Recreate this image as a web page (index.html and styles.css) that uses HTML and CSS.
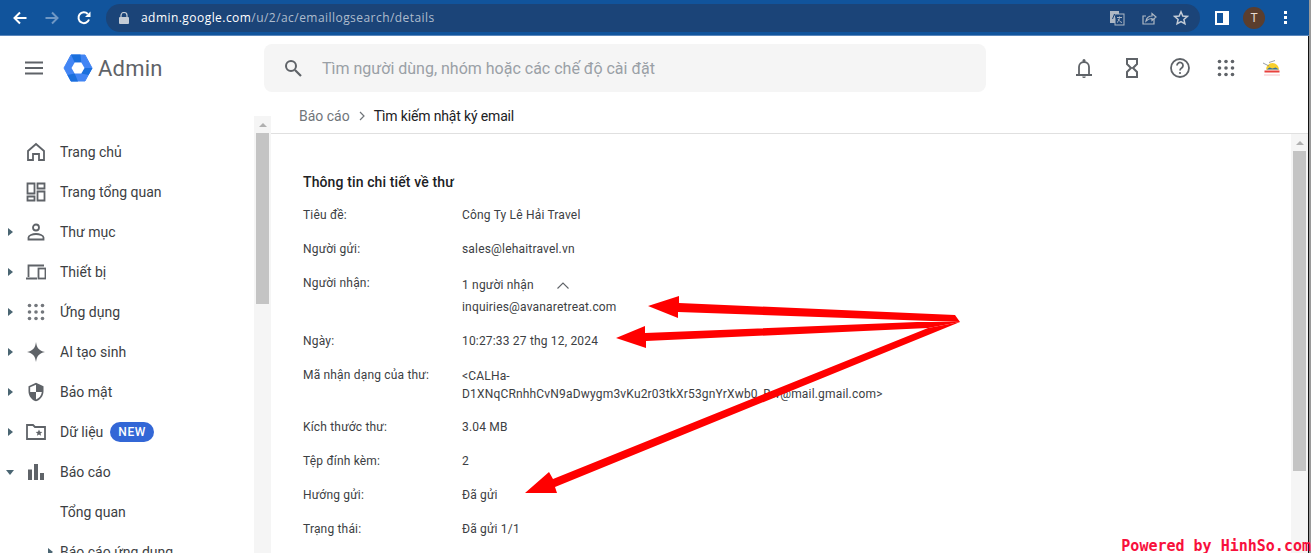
FILE: index.html
```html
<!DOCTYPE html>
<html lang="vi">
<head>
    <meta charset="UTF-8">
    <meta name="viewport" content="width=device-width, initial-scale=1.0">
    <title>Admin - Tìm kiếm nhật ký email</title>
    <link rel="stylesheet" href="styles.css">
</head>
<body>

<div class="browser-bar">
    <svg class="nav-btn" viewBox="0 0 16 16"><path d="M14.500 8H3M8 2.500 2.500 8 8 13.500" fill="none" stroke="#fff" stroke-width="2"/></svg>
    <svg class="nav-btn" viewBox="0 0 16 16"><path d="M1.500 8H13M8 2.500 13.500 8 8 13.500" fill="none" stroke="#6f97c4" stroke-width="2"/></svg>
    <svg class="nav-btn" viewBox="0 0 16 16"><path d="M13 9.500A5.400 5.400 0 1 1 11.800 4" fill="none" stroke="#fff" stroke-width="2"/><path d="M14.500 1.500v5.500H9z" fill="#fff"/></svg>
    <div class="omnibox">
        <svg class="lock" viewBox="0 0 10 12"><path d="M2 5V3.500a3 3 0 0 1 6 0V5" fill="none" stroke="#c4ccd6" stroke-width="1.200"/><rect y="5" width="10" height="7" rx="1" fill="#c4ccd6"/></svg>
        <span class="url"><b>admin.google.com</b>/u/2/ac/emaillogsearch/details</span>
        <svg class="omni-icon" viewBox="0 0 16 16"><rect x="1" y="1" width="9" height="12" fill="#aeb8c4"/><rect x="6" y="4" width="9" height="11" fill="#1b4478" stroke="#aeb8c4"/><path d="M3.500 9 5.500 4 7.500 9" fill="none" stroke="#1b4478"/><path d="M8 7.500h5M10.500 6.500c0 3-1 5-2.500 6M9 9c1 2 2.500 3 4 3.500" fill="none" stroke="#aeb8c4"/></svg>
        <svg class="omni-icon" viewBox="0 0 16 16"><path d="M13 9v5H2V6h3" fill="none" stroke="#aeb8c4" stroke-width="1.200"/><path d="M5 11c.5-3 3-5 6-5V3.500l4 3.500-4 3.500V8.500c-2.500 0-4.500 1-6 2.500z" fill="none" stroke="#aeb8c4" stroke-width="1.200"/></svg>
        <svg class="omni-icon" viewBox="0 0 16 16"><path d="M8 1.800l1.800 4.200 4.500.4-3.400 3 1 4.400L8 11.500l-3.900 2.300 1-4.400-3.400-3 4.500-.4z" fill="none" stroke="#c4ccd6" stroke-width="1.500"/></svg>
    </div>
    <div class="profile-area">
        <svg class="panel-icon" viewBox="0 0 14 14"><rect width="14" height="14" fill="#fff"/><rect x="2" y="2" width="6" height="10" fill="#11549c"/></svg>
        <span class="avatar">T</span>
        <span class="menu-dots"><i></i><i></i><i></i></span>
    </div>
</div>

<div class="window">
    <header class="app-header">
        <div class="brand">
            <svg class="hamburger" viewBox="0 0 18 14"><path d="M0 1.500h18M0 7h18M0 12.500h18" stroke="#5f6368" stroke-width="1.800"/></svg>
            <svg class="logo" viewBox="0 0 30 28">
                <path d="M8 1H22L29 14 22 27H8L1 14z" fill="#4285f4" stroke="#4285f4" stroke-linejoin="round"/>
                <path d="M8 .5H17.500L18.300 8.500H11.700zM29.500 14 25.500 21 18.300 19.500 21.500 14zM4.500 21 11.700 19.500 15 27.500H8z" fill="#1a6fdc"/>
                <path d="M8.500 14 11.700 8.500H18.300L21.500 14 18.300 19.500H11.700z" fill="#fff"/>
            </svg>
            <span class="brand-name">Admin</span>
        </div>
        <div class="search-box">
            <svg class="search-icon" viewBox="0 0 18 18"><circle cx="7" cy="7" r="5" fill="none" stroke="#5f6368" stroke-width="2"/><path d="M11 11l6 6" stroke="#5f6368" stroke-width="2.200"/></svg>
            <span>Tìm người dùng, nhóm hoặc các chế độ cài đặt</span>
        </div>
        <div class="header-icons">
            <svg viewBox="0 0 24 24"><path d="M4 19h16M7 18.500V11a5 5 0 0 1 10 0v7.500" fill="none" stroke="#5f6368" stroke-width="1.800"/><circle cx="12" cy="4.500" r="1.500" fill="#5f6368"/><path d="M10.200 20.500h3.600a1.800 1.500 0 0 1-3.600 0z" fill="#5f6368"/></svg>
            <svg viewBox="0 0 24 24"><path d="M7 3h10v5L13 12l4 4v5H7v-5L11 12 7 8z" fill="none" stroke="#5f6368" stroke-width="2"/></svg>
            <svg viewBox="0 0 24 24"><circle cx="12" cy="12" r="9" fill="none" stroke="#5f6368" stroke-width="1.800"/><path d="M9 9.500a3 3 0 1 1 4.700 2.400c-1.200.9-1.700 1.400-1.700 2.600" fill="none" stroke="#5f6368" stroke-width="1.800"/><circle cx="12" cy="17" r="1.100" fill="#5f6368"/></svg>
            <svg viewBox="0 0 24 24" fill="#5f6368"><circle cx="3.500" cy="5.500" r="1.800"/><circle cx="10" cy="5.500" r="1.800"/><circle cx="16.500" cy="5.500" r="1.800"/><circle cx="3.500" cy="12" r="1.800"/><circle cx="10" cy="12" r="1.800"/><circle cx="16.500" cy="12" r="1.800"/><circle cx="3.500" cy="18.500" r="1.800"/><circle cx="10" cy="18.500" r="1.800"/><circle cx="16.500" cy="18.500" r="1.800"/></svg>
            <svg class="org-logo" viewBox="0 0 18 16">
                <path d="M3 9.500a6.500 6.500 0 0 1 13 0z" fill="#f7cf2e"/>
                <path d="M0 3l6 3M6 2.500l6-2" stroke="#7c858c" stroke-width=".8"/>
                <path d="M3.500 9.500l3-2 3 1 3-1 3.500 2z" fill="#2f6f9f"/>
                <rect x="1.500" y="10.500" width="15" height="2" fill="#e8413c"/>
                <rect x="1" y="14.500" width="16" height="1" fill="#f7c3c8"/>
            </svg>
        </div>
    </header>

    <div class="app-body">
        <nav class="sidebar">
            <ul class="nav-list">
                <li class="nav-item">
                    <span class="caret"></span>
                    <svg viewBox="0 0 20 20"><path d="M2 9 10 2l8 7v9h-5v-6H7v6H2z" fill="none" stroke="#5f6368" stroke-width="1.800"/></svg>
                    Trang chủ
                </li>
                <li class="nav-item">
                    <span class="caret"></span>
                    <svg viewBox="0 0 20 20"><path d="M1.500 1.500h7v10h-7zM11.500 1.500h7v5h-7zM11.500 9.500h7v9h-7zM1.500 14.500h7v4h-7z" fill="none" stroke="#5f6368" stroke-width="1.800"/></svg>
                    Trang tổng quan
                </li>
                <li class="nav-item">
                    <span class="caret closed"></span>
                    <svg viewBox="0 0 20 20"><circle cx="10" cy="5.500" r="3" fill="none" stroke="#5f6368" stroke-width="1.800"/><path d="M2.500 17.500v-2c0-2 4-3.500 7.500-3.500s7.500 1.500 7.500 3.500v2z" fill="none" stroke="#5f6368" stroke-width="1.800"/></svg>
                    Thư mục
                </li>
                <li class="nav-item">
                    <span class="caret closed"></span>
                    <svg viewBox="0 0 20 20"><path d="M2.500 15V3.500H18M0 16.500h11" fill="none" stroke="#5f6368" stroke-width="1.800"/><rect x="12.500" y="6.500" width="7" height="10" fill="none" stroke="#5f6368" stroke-width="1.800"/></svg>
                    Thiết bị
                </li>
                <li class="nav-item">
                    <span class="caret closed"></span>
                    <svg viewBox="0 0 20 20" fill="#73777c"><circle cx="3.500" cy="3.500" r="1.800"/><circle cx="10" cy="3.500" r="1.800"/><circle cx="16.500" cy="3.500" r="1.800"/><circle cx="3.500" cy="10" r="1.800"/><circle cx="10" cy="10" r="1.800"/><circle cx="16.500" cy="10" r="1.800"/><circle cx="3.500" cy="16.500" r="1.800"/><circle cx="10" cy="16.500" r="1.800"/><circle cx="16.500" cy="16.500" r="1.800"/></svg>
                    Ứng dụng
                </li>
                <li class="nav-item">
                    <span class="caret closed"></span>
                    <svg viewBox="0 0 20 20"><path d="M10 0c.8 6 3 8.700 9 10-6 1.300-8.200 4-9 10-.8-6-3-8.700-9-10 6-1.300 8.200-4 9-10z" fill="#5f6368"/></svg>
                    AI tạo sinh
                </li>
                <li class="nav-item">
                    <span class="caret closed"></span>
                    <svg viewBox="0 0 24 24"><path d="M12 1 3 5v6c0 5.550 3.840 10.740 9 12 5.160-1.260 9-6.450 9-12V5l-9-4zm0 10.990h7c-.53 4.120-3.280 7.790-7 8.940V12H5V6.300l7-3.110v8.800z" fill="#5f6368"/></svg>
                    Bảo mật
                </li>
                <li class="nav-item">
                    <span class="caret closed"></span>
                    <svg viewBox="0 0 20 20"><path d="M1 3h6l2 2h10v12H1z" fill="none" stroke="#5f6368" stroke-width="1.800"/><path d="M13 7.500l1 2.300 2.300.2-1.800 1.500.6 2.300-2.100-1.300-2.100 1.300.6-2.300-1.800-1.500 2.300-.2z" fill="#5f6368"/></svg>
                    Dữ liệu
                    <span class="badge">NEW</span>
                </li>
                <li class="nav-item">
                    <span class="caret open"></span>
                    <svg viewBox="0 0 20 20" fill="#5f6368"><rect x="2" y="7.500" width="4" height="10.500"/><rect x="8" y="2" width="4" height="16"/><rect x="14" y="11" width="4" height="7"/></svg>
                    Báo cáo
                </li>
                <li class="nav-item">
                    <span class="caret"></span>
                    <span class="icon-gap"></span>
                    Tổng quan
                </li>
                <li class="nav-item nav-sub">
                    <span class="caret closed"></span>
                    Báo cáo ứng dụng
                </li>
            </ul>
            <div class="scrollbar side-scroll">
                <span class="scroll-up"></span>
                <span class="scroll-thumb"></span>
            </div>
        </nav>

        <main class="content">
            <div class="breadcrumb">
                <span class="crumb-parent">Báo cáo</span>
                <svg viewBox="0 0 6 10"><path d="M1 1l4 4-4 4" fill="none" stroke="#70757a" stroke-width="1.200"/></svg>
                <span class="crumb-current">Tìm kiếm nhật ký email</span>
            </div>
            <div class="content-scroll">
                <section class="details">
                    <h2>Thông tin chi tiết về thư</h2>
                    <dl class="detail-list">
                        <dt>Tiêu đề:</dt>
                        <dd>Công Ty Lê Hải Travel</dd>
                        <dt>Người gửi:</dt>
                        <dd>sales@lehaitravel.vn</dd>
                        <dt>Người nhận:</dt>
                        <dd class="recipients">
                            <div class="recipient-count">1 người nhận
                                <svg viewBox="0 0 12 7"><path d="M.5 6.500 6 1l5.500 5.500" fill="none" stroke="#5f6368" stroke-width="1.100"/></svg>
                            </div>
                            <div>inquiries@avanaretreat.com</div>
                        </dd>
                        <dt>Ngày:</dt>
                        <dd>10:27:33 27 thg 12, 2024</dd>
                        <dt>Mã nhận dạng của thư:</dt>
                        <dd class="message-id">&lt;CALHa-<br>D1XNqCRnhhCvN9aDwygm3vKu2r03tkXr53gnYrXwb0_Bw@mail.gmail.com&gt;</dd>
                        <dt>Kích thước thư:</dt>
                        <dd>3.04 MB</dd>
                        <dt>Tệp đính kèm:</dt>
                        <dd>2</dd>
                        <dt>Hướng gửi:</dt>
                        <dd>Đã gửi</dd>
                        <dt>Trạng thái:</dt>
                        <dd>Đã gửi 1/1</dd>
                    </dl>
                </section>
                <div class="scrollbar main-scroll">
                    <span class="scroll-up"></span>
                    <span class="scroll-thumb"></span>
                </div>
            </div>
        </main>
    </div>
</div>

<!-- annotation arrows drawn over the screenshot -->
<svg class="arrows" viewBox="0 0 1311 553" fill="#ff0000">
    <path d="M648 306 679 296 679 303 955 315 960 322 678 312 678 318z"/>
    <path d="M616 338 645 326 645 333 917 322 960 322 928 328 646 341 646 348z"/>
    <path d="M525 493 549 472 553 479 928 328 960 322 555 487 557 493z"/>
</svg>
<div class="watermark">Powered by HinhSo.com</div>

</body>
</html>
```

FILE: styles.css
```css
* {
    box-sizing: border-box;
}

html, body {
    height: 100%;
}

body {
    margin: 0;
    padding-right: 2px;
    font-family: Roboto, "Liberation Sans", sans-serif;
    background-color: #9a9a9a;
    color: #3c4043;
    overflow: hidden;
    position: relative;
}

/* browser bar */
.browser-bar {
    height: 36px;
    background-color: #11549c;
    border-bottom: 1px solid #5a86bb;
    display: flex;
    align-items: center;
    padding-left: 12px;
}

.nav-btn {
    width: 16px;
    height: 16px;
    margin-right: 16px;
}

.omnibox {
    width: 1094px;
    height: 28px;
    margin-left: -2px;
    padding: 0 0 0 13px;
    border-radius: 14px;
    background-color: #1b4478;
    display: flex;
    align-items: center;
}

.lock {
    width: 10px;
    height: 12px;
    margin-right: 12px;
}

.url {
    flex: 1;
    font-family: "Open Sans", Roboto, sans-serif;
    font-size: 12px;
    letter-spacing: 0.45px;
    color: #aebccd;
}

.url b {
    font-weight: normal;
    color: #fff;
}

.omni-icon {
    width: 16px;
    height: 16px;
    margin-right: 16px;
}

.omni-icon:last-child {
    margin-right: 11px;
}

.profile-area {
    display: flex;
    align-items: center;
    margin-left: 15px;
}

.panel-icon {
    width: 14px;
    height: 14px;
}

.avatar {
    width: 22px;
    height: 22px;
    margin-left: 14px;
    border-radius: 50%;
    background-color: #5b3e2e;
    color: #e8dcd3;
    font-size: 12px;
    line-height: 22px;
    text-align: center;
}

.menu-dots {
    display: flex;
    flex-direction: column;
    gap: 2px;
    margin-left: 19px;
}

.menu-dots i {
    width: 3px;
    height: 3px;
    background-color: #fff;
}

/* admin app */
.window {
    height: 517px;
    display: flex;
    flex-direction: column;
    background-color: #fff;
    border-right: 1px solid #111;
}

.app-header {
    height: 64px;
    flex-shrink: 0;
    display: flex;
    align-items: center;
}

.brand {
    width: 264px;
    display: flex;
    align-items: center;
    padding-left: 25px;
}

.hamburger {
    width: 18px;
    height: 14px;
}

.logo {
    width: 30px;
    height: 28px;
    margin-left: 20px;
}

.brand-name {
    margin-left: 5px;
    font-size: 22px;
    color: #5f6368;
    letter-spacing: 0.2px;
}

.search-box {
    width: 722px;
    height: 48px;
    border-radius: 8px;
    background-color: #f5f5f5;
    display: flex;
    align-items: center;
    padding-left: 20px;
    font-size: 16px;
    color: #9aa0a6;
}

.search-icon {
    width: 18px;
    height: 18px;
    margin-right: 20px;
}

.header-icons {
    display: flex;
    align-items: center;
    gap: 24px;
    margin-left: 86px;
}

.header-icons svg {
    width: 24px;
    height: 24px;
}

.header-icons .org-logo {
    width: 18px;
    height: 16px;
    margin-left: -1px;
}

.app-body {
    flex: 1;
    min-height: 0;
    display: flex;
}

/* sidebar */
.sidebar {
    width: 271px;
    flex-shrink: 0;
    display: flex;
    padding-top: 32px;
    position: relative;
}

.nav-list {
    list-style: none;
    width: 255px;
    margin: 0;
    padding: 0;
}

.nav-item {
    height: 40px;
    display: flex;
    align-items: center;
    padding-left: 8px;
    font-size: 14px;
    color: #3c4043;
    white-space: nowrap;
}

.nav-item svg,
.icon-gap {
    width: 20px;
    height: 20px;
    flex-shrink: 0;
    margin: 0 14px 0 12px;
}

.nav-sub {
    padding-left: 48px;
}

.caret {
    width: 6px;
    height: 8px;
    flex-shrink: 0;
}

.caret.closed {
    border-left: 5px solid #4a6572;
    border-top: 4px solid transparent;
    border-bottom: 4px solid transparent;
}

.caret.open {
    width: 8px;
    height: 5px;
    margin-left: -2px;
    border-top: 5px solid #4a6572;
    border-left: 4px solid transparent;
    border-right: 4px solid transparent;
}

.nav-sub .caret {
    margin-right: 6px;
}

.badge {
    margin-left: 7px;
    padding: 0 8px;
    height: 20px;
    border-radius: 10px;
    background-color: #3367d6;
    color: #fff;
    font-size: 12px;
    font-weight: 500;
    line-height: 20px;
    letter-spacing: 0.6px;
}

/* scrollbars */
.scrollbar {
    background-color: #f5f5f5;
    display: flex;
    flex-direction: column;
    align-items: center;
}

.side-scroll {
    position: absolute;
    left: 254px;
    top: 16px;
    bottom: 0;
    width: 17px;
}

.scroll-up {
    width: 8px;
    height: 4px;
    flex-shrink: 0;
    border-left: 4px solid transparent;
    border-right: 4px solid transparent;
    border-bottom: 4px solid #b0b0b0;
    margin-top: 7px;
    margin-bottom: 6px;
}

.scroll-thumb {
    width: 13px;
    background-color: #c4c4c4;
}

.side-scroll .scroll-thumb {
    height: 171px;
}

/* content */
.content {
    flex: 1;
    min-width: 0;
    display: flex;
    flex-direction: column;
}

.breadcrumb {
    height: 34px;
    flex-shrink: 0;
    display: flex;
    align-items: center;
    padding-left: 28px;
    padding-bottom: 2px;
    border-bottom: 1px solid #e0e0e0;
    font-size: 14px;
}

.breadcrumb svg {
    width: 6px;
    height: 10px;
    margin: 0 9px 0 9px;
}

.crumb-parent {
    color: #70757a;
}

.crumb-current {
    color: #202124;
    letter-spacing: -0.15px;
}

.content-scroll {
    flex: 1;
    min-height: 0;
    display: flex;
}

.details {
    flex: 1;
    padding: 40px 0 0 32px;
}

.details h2 {
    margin: 0 0 17px;
    font-size: 14px;
    line-height: 16px;
    font-weight: 500;
    letter-spacing: 0.12px;
    color: #202124;
}

.detail-list {
    display: grid;
    grid-template-columns: 159px 1fr;
    row-gap: 18px;
    margin: 0;
    font-size: 12px;
    line-height: 16px;
    letter-spacing: 0.18px;
    color: #3c4043;
}

.detail-list dt,
.detail-list dd {
    margin: 0;
}

.recipient-count {
    display: flex;
    align-items: center;
    gap: 23px;
    padding-top: 2px;
    margin-bottom: 6px;
}

.recipient-count svg {
    width: 12px;
    height: 7px;
}

.message-id {
    line-height: 18px;
    height: 34px;
}

.main-scroll {
    width: 17px;
    flex-shrink: 0;
}

.main-scroll .scroll-thumb {
    height: 320px;
}

/* overlays */
.arrows {
    position: absolute;
    left: 0;
    top: 0;
    width: 1311px;
    height: 553px;
    pointer-events: none;
}

.watermark {
    position: absolute;
    right: 0;
    bottom: 0;
    font-family: "DejaVu Sans Mono", "Liberation Mono", monospace;
    font-size: 15px;
    font-weight: bold;
    line-height: 14px;
    color: #f8103c;
    white-space: nowrap;
}
```
